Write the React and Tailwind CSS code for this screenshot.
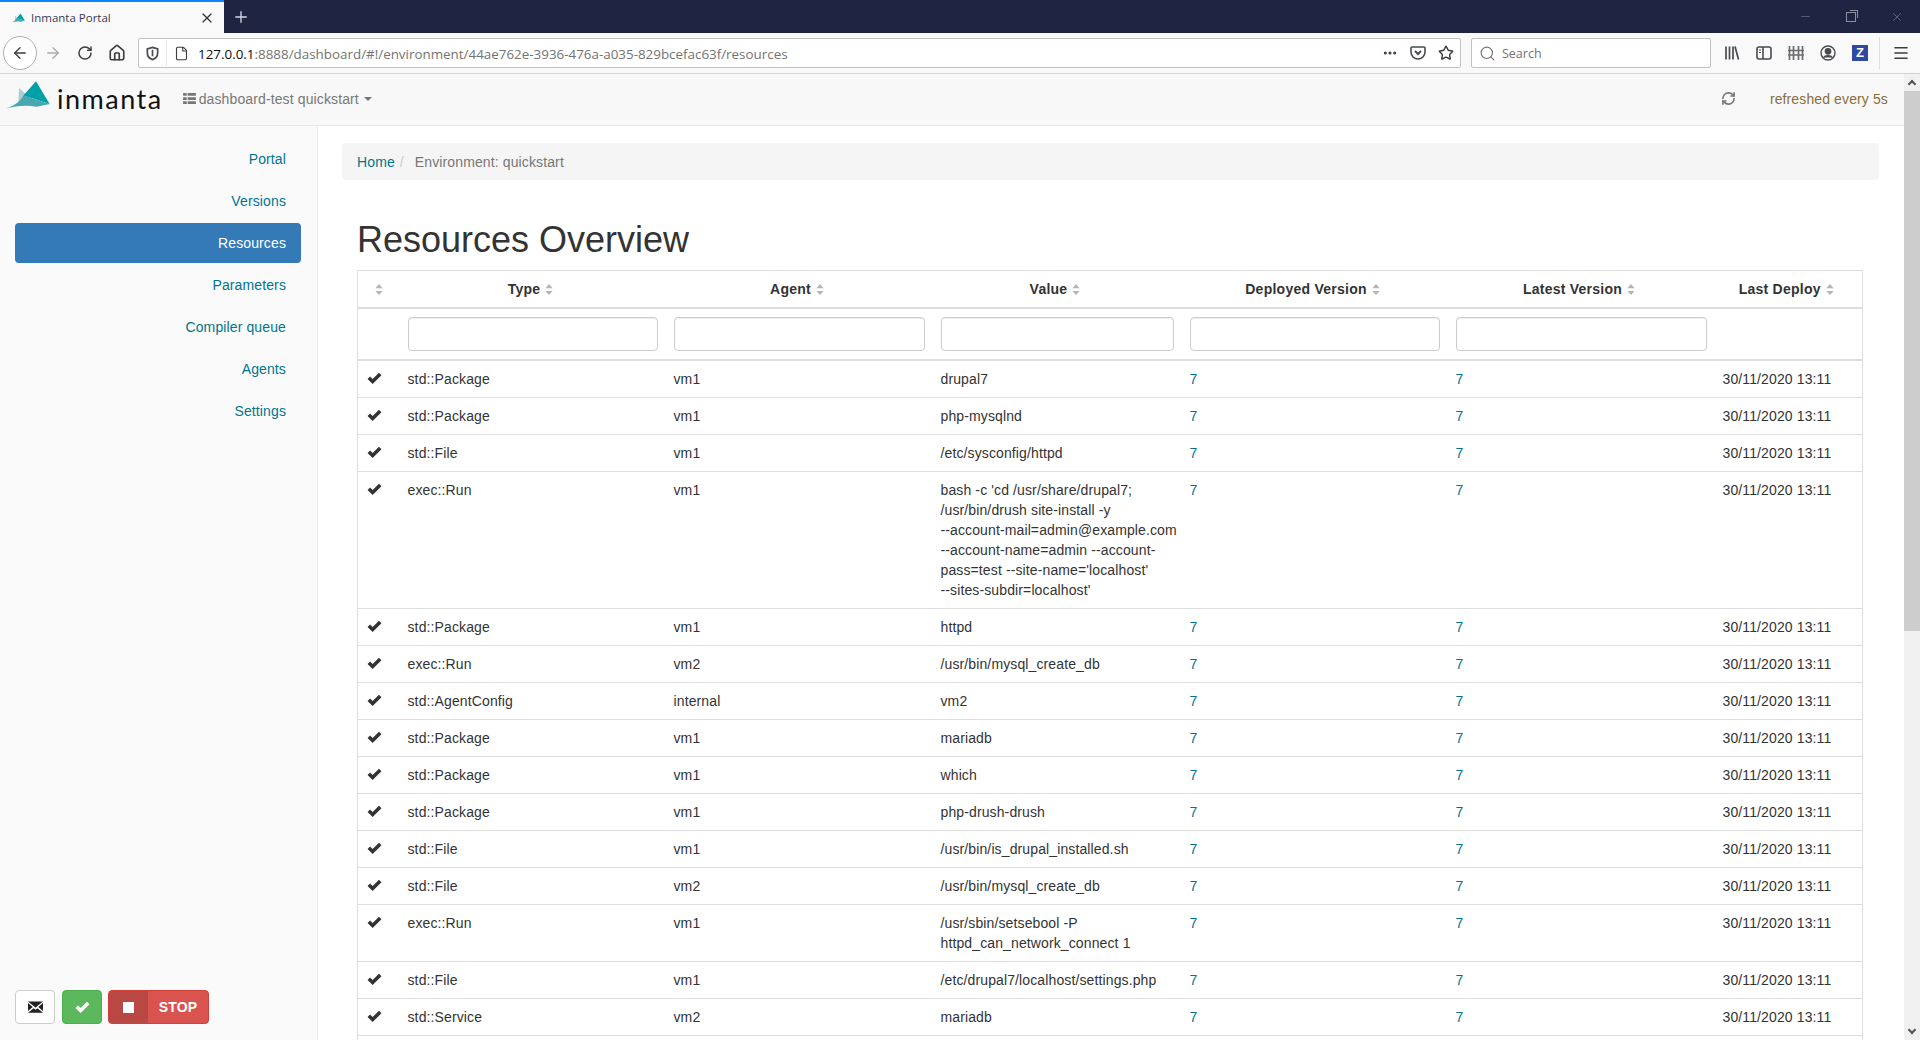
import React from "react";
import { Search, RefreshCw, RotateCw, ArrowLeft, ArrowRight, Home, File, Plus, X, Minus, Star, Ellipsis, Menu } from "lucide-react";

const rows = [
  ["std::Package", "vm1", "drupal7"],
  ["std::Package", "vm1", "php-mysqlnd"],
  ["std::File", "vm1", "/etc/sysconfig/httpd"],
  ["exec::Run", "vm1", "bash -c 'cd /usr/share/drupal7;\n/usr/bin/drush site-install -y\n--account-mail=admin@example.com\n--account-name=admin --account-\npass=test --site-name='localhost'\n--sites-subdir=localhost'"],
  ["std::Package", "vm1", "httpd"],
  ["exec::Run", "vm2", "/usr/bin/mysql_create_db"],
  ["std::AgentConfig", "internal", "vm2"],
  ["std::Package", "vm1", "mariadb"],
  ["std::Package", "vm1", "which"],
  ["std::Package", "vm1", "php-drush-drush"],
  ["std::File", "vm1", "/usr/bin/is_drupal_installed.sh"],
  ["std::File", "vm2", "/usr/bin/mysql_create_db"],
  ["exec::Run", "vm1", "/usr/sbin/setsebool -P\nhttpd_can_network_connect 1"],
  ["std::File", "vm1", "/etc/drupal7/localhost/settings.php"],
  ["std::Service", "vm2", "mariadb"],
];

const navItems = ["Portal", "Versions", "Resources", "Parameters", "Compiler queue", "Agents", "Settings"];

const Check = ({ className }) => (
  <svg viewBox="0 0 16 14" className={className} fill="currentColor">
    <path d="M0.500 7.500 3.200 4.800 6 7.600 12.800 0.800 15.500 3.500 6 13Z" />
  </svg>
);

const SortIcon = ({ first }) => (
  <svg
    viewBox="0 0 8 12"
    className={first ? "inline-block w-[8px] h-[11px] align-[-1px] text-[#b5b5b5]" : "inline-block w-[8px] h-[11px] ml-[5px] align-[-1px] text-[#b5b5b5]"}
    fill="currentColor"
  >
    <path d="M4 0 8 4.500H0Z" />
    <path d="M4 12 0 7.500H8Z" />
  </svg>
);

const Logo = ({ className }) => (
  <svg viewBox="0 0 43 27" className={className}>
    <path d="M12.700 6.700 24 17 12 24Z" fill="#a9cfd3" />
    <path d="M29.300 0 42.700 22.300 17 14Z" fill="#00a0a8" />
    <path d="M17 14 42.700 22.300 30 25C20 23 10 24 0 26.700 8 24 14 20 17 14Z" fill="#49a7b0" />
  </svg>
);

const Toolbar = () => (
  <div className="h-[41px] bg-[#f9f9fa] border-b border-[#d4d4d4] flex items-center text-[#3d3d3f] shrink-0">
    <div className="ml-[3px] w-[34px] h-[34px] rounded-full border border-[#b0b0b0] flex items-center justify-center bg-white">
      <ArrowLeft size={18} strokeWidth={1.8} />
    </div>
    <ArrowRight size={18} strokeWidth={1.8} className="ml-[7px] text-[#aaaaaa]" />
    <RotateCw size={16} strokeWidth={2.2} className="ml-[15px]" />
    <Home size={18} strokeWidth={2.2} className="ml-[15px]" />
    <div className="ml-[12px] w-[1323px] h-[30px] bg-white border border-[#c2c2c2] rounded-[2px] flex items-center">
      <svg viewBox="0 0 16 16" className="w-[15px] h-[15px] ml-[6px]" fill="none" stroke="#4a4a4f" strokeWidth="1.8">
        <path d="M8 1.500 13.500 3v4.500c0 3.500-2.500 6-5.500 7-3-1-5.500-3.500-5.500-7V3Z" />
        <path d="M8 4v7" />
      </svg>
      <div className="ml-[6px] w-px h-[26px] bg-[#e4e4e4]"></div>
      <File size={15} strokeWidth={1.8} className="ml-[7px]" />
      <span className="ml-[9px] pt-[1px] text-[13.400px] tracking-normal font-['Open_Sans',sans-serif] text-[#737373] whitespace-nowrap flex-1">
        <span className="text-[#0c0c0d]">127.0.0.1</span>:8888/dashboard/#!/environment/44ae762e-3936-476a-a035-829bcefac63f/resources
      </span>
      <Ellipsis size={16} strokeWidth={2.6} className="mr-[12px]" />
      <svg viewBox="0 0 16 16" className="w-[16px] h-[16px] mr-[12px]" fill="none" stroke="#4a4a4f" strokeWidth="1.6">
        <path d="M2 2h12a1 1 0 0 1 1 1v4a7 7 0 0 1-14 0V3a1 1 0 0 1 1-1Z" />
        <path d="M5 6l3 3 3-3" strokeWidth="2" />
      </svg>
      <Star size={16} strokeWidth={2.2} className="mr-[6px]" />
    </div>
    <div className="ml-[10px] w-[240px] h-[30px] bg-white border border-[#c2c2c2] rounded-[2px] flex items-center">
      <Search size={17} strokeWidth={1.6} className="ml-[7px] text-[#737373]" />
      <span className="ml-[6px] pt-[1px] text-[12.500px] tracking-normal font-['Open_Sans',sans-serif] text-[#737373]">Search</span>
    </div>
    <div className="ml-[13px] flex items-center gap-[16px]">
      <svg viewBox="0 0 16 16" className="w-[16px] h-[16px]" fill="none" stroke="#4a4a4f" strokeWidth="1.7">
        <path d="M2 1.500v13M5.500 1.500v13M9 1.500v13M11 1.500l3.500 13" />
      </svg>
      <svg viewBox="0 0 16 16" className="w-[16px] h-[16px]" fill="none" stroke="#4a4a4f" strokeWidth="1.6">
        <rect x="1" y="2" width="14" height="12" rx="2" />
        <path d="M7 2v12" />
        <path d="M3 5h2M3 7.500h2" strokeWidth="1" />
      </svg>
      <svg viewBox="0 0 16 16" className="w-[16px] h-[16px]" fill="none" stroke="#6d6d70" strokeWidth="1.700">
        <path d="M1.500 1v14M5.500 1v14M10.500 1v14M14.500 1v14M0 5.500h16M0 10h16" />
      </svg>
      <svg viewBox="0 0 16 16" className="w-[16px] h-[16px]" fill="none" stroke="#4a4a4f" strokeWidth="1.4">
        <circle cx="8" cy="8" r="7" />
        <circle cx="8" cy="6.300" r="2.700" fill="#4a4a4f" />
        <path d="M3.500 12.500C5 10 11 10 12.500 12.500" fill="#4a4a4f" />
      </svg>
      <div className="w-[16px] h-[16px] bg-[#2f4a9e] text-white text-[13px] font-bold leading-[16px] text-center">Z</div>
    </div>
    <div className="ml-[11px] w-px h-[32px] bg-[#dedede]"></div>
    <Menu size={18} strokeWidth={2.2} className="ml-[12px]" />
  </div>
);

const App = () => {
  return (
    <div className="h-[1040px] w-[1920px] overflow-hidden flex flex-col font-['Liberation_Sans',Arial,sans-serif] text-[14px] leading-[20px] tracking-[0.12px] text-[#333333] bg-white">
      {/* browser chrome */}
      <div className="h-[33px] bg-[#1f2442] flex items-stretch shrink-0">
        <div className="w-[224px] bg-[#f9f9fa] border-t-2 border-[#0a84ff] flex items-center pl-[11px]">
          <Logo className="w-[14px] h-[10px]" />
          <span className="ml-[6px] text-[11.500px] tracking-normal font-['Open_Sans',sans-serif] text-[#3a3a50]">Inmanta Portal</span>
          <X size={16} strokeWidth={1.8} className="ml-auto mr-[9px] text-[#333333]" />
        </div>
        <div className="flex items-center ml-[8px] text-[#d8d8e0]"><Plus size={18} strokeWidth={1.8} /></div>
        <div className="ml-auto flex items-center text-[#8b8ea3]">
          <Minus size={13} strokeWidth={1} />
          <div className="ml-[34px] w-[10px] h-[10px] border border-[#8b8ea3] relative">
            <span className="absolute -top-[3px] -right-[3px] w-[8px] h-[8px] border-t border-r border-[#8b8ea3]"></span>
          </div>
          <X size={14} strokeWidth={1} className="ml-[34px] mr-[16px]" />
        </div>
      </div>
      <Toolbar />

      <div className="flex-1 flex min-h-0">
        <div className="flex-1 flex flex-col min-w-0">
          {/* top navbar */}
          <div className="h-[52px] bg-[#f8f8f8] border-b border-[#e7e7e7] flex items-center shrink-0 pl-[6px] pb-[2px]">
            <Logo className="w-[44px] h-[28px] mb-[7px]" />
            <span className="ml-[7px] text-[27px] tracking-[1.500px] font-['Lato',sans-serif] font-normal text-[#111111] leading-none mb-[1px]">inmanta</span>
            <span className="ml-[20px] text-[#777777] flex items-center">
              <svg viewBox="0 0 14 12" className="w-[13px] h-[11px] mr-[3px]" fill="currentColor">
                <path d="M0 0h4v3H0ZM5 0h9v3H5ZM0 4.500h4v3H0ZM5 4.500h9v3H5ZM0 9h4v3H0ZM5 9h9v3H5Z" />
              </svg>
              dashboard-test quickstart
              <span className="ml-[5px] w-0 h-0 border-x-[4px] border-x-transparent border-t-[4px] border-t-[#777777]"></span>
            </span>
            <RefreshCw size={15} strokeWidth={2.6} className="ml-auto text-[#777777]" />
            <span className="ml-[34px] mr-[16px] text-[#8a6d3b]">refreshed every 5s</span>
          </div>

          <div className="flex-1 flex min-h-0">
            {/* sidebar */}
            <div className="w-[318px] shrink-0 bg-[#fafafa] border-r border-[#eeeeee] pl-[15px] pr-[16px] pt-[13px] flex flex-col">
              {navItems.map((item) => (
                <div
                  key={item}
                  className={
                    item === "Resources"
                      ? "h-[40px] mb-[2px] rounded-[4px] bg-[#337ab7] text-white flex items-center justify-end pr-[15px]"
                      : "h-[40px] mb-[2px] text-[#007590] flex items-center justify-end pr-[15px]"
                  }
                >
                  {item}
                </div>
              ))}
              <div className="mt-auto mb-[16px] flex items-center">
                <div className="w-[40px] h-[34px] bg-white border border-[#cccccc] rounded-[4px] flex items-center justify-center">
                  <svg viewBox="0 0 16 12" className="w-[15px] h-[12px]" fill="#222222">
                    <path d="M0 0 8 6.500 16 0ZM0 1.800V10.200L5 6ZM16 1.800V10.200L11 6ZM0 12H16L10 7.200 8 8.800 6 7.200Z" />
                  </svg>
                </div>
                <div className="ml-[7px] w-[40px] h-[34px] bg-[#5cb85c] border border-[#4cae4c] rounded-[4px] flex items-center justify-center text-white">
                  <Check className="w-[15px] h-[13px]" />
                </div>
                <div className="ml-[6px] w-[101px] h-[34px] bg-[#d9534f] border border-[#d43f3a] rounded-[4px] flex items-center overflow-hidden text-white font-bold">
                  <span className="w-[39px] h-full bg-[#b94743] flex items-center justify-center">
                    <span className="w-[11px] h-[11px] bg-white"></span>
                  </span>
                  <span className="flex-1 text-center">STOP</span>
                </div>
              </div>
            </div>

            {/* main */}
            <div className="flex-1 min-w-0 overflow-hidden pl-[24px] pr-[25px] pt-[17px]">
              <div className="h-[37px] bg-[#f5f5f5] rounded-[4px] flex items-center pl-[15px]">
                <span className="text-[#007590]">Home</span>
                <span className="text-[#cccccc] ml-[5px]">/</span>
                <span className="text-[#777777] ml-[11px]">Environment: quickstart</span>
              </div>
              <h1 className="ml-[15px] mt-[40px] mb-[10px] text-[36px] leading-[40px] font-normal tracking-normal">Resources Overview</h1>
              <table className="ml-[15px] w-[1506px] table-fixed border-collapse border border-[#dddddd]">
                <colgroup>
                  <col className="w-[42px]" />
                  <col className="w-[266px]" />
                  <col className="w-[267px]" />
                  <col className="w-[249px]" />
                  <col className="w-[266px]" />
                  <col className="w-[267px]" />
                  <col />
                </colgroup>
                <thead>
                  <tr className="border-b-2 border-[#dddddd] h-[37px]">
                    <th className="p-2 text-center font-bold"><SortIcon first /></th>
                    {["Type", "Agent", "Value", "Deployed Version", "Latest Version", "Last Deploy"].map((h) => (
                      <th key={h} className="py-2 pl-2 pr-[12px] text-center font-bold whitespace-nowrap tracking-[0.25px]">{h}<SortIcon /></th>
                    ))}
                  </tr>
                  <tr className="border-b-2 border-[#dddddd]">
                    <th className="p-2"></th>
                    {[0, 1, 2, 3, 4].map((i) => (
                      <th key={i} className="p-2">
                        <input className="block w-full h-[34px] bg-white border border-[#cccccc] rounded-[4px] shadow-[inset_0_1px_1px_rgba(0,0,0,0.075)]" />
                      </th>
                    ))}
                    <th className="p-2"></th>
                  </tr>
                </thead>
                <tbody>
                  {rows.map((row, i) => (
                    <tr key={i} className="border-b border-[#dddddd] align-top">
                      <td className="p-2 pl-[9px] pt-[11px]"><Check className="w-[15px] h-[13px]" /></td>
                      <td className="p-2">{row[0]}</td>
                      <td className="p-2">{row[1]}</td>
                      <td className="p-2 whitespace-pre">{row[2]}</td>
                      <td className="p-2 text-[#007590]">7</td>
                      <td className="p-2 text-[#007590]">7</td>
                      <td className="p-2 whitespace-nowrap">30/11/2020 13:11</td>
                    </tr>
                  ))}
                  <tr className="h-[37px]">
                    <td colSpan={7}></td>
                  </tr>
                </tbody>
              </table>
            </div>
          </div>
        </div>

        {/* scrollbar */}
        <div className="w-[16px] shrink-0 bg-[#f0f0f0] flex flex-col">
          <div className="h-[17px] flex items-center justify-center">
            <span className="w-[6px] h-[6px] border-l-2 border-t-2 border-[#505050] rotate-45 mt-[3px]"></span>
          </div>
          <div className="h-[540px] bg-[#cdcdcd]"></div>
          <div className="mt-auto h-[17px] flex items-center justify-center">
            <span className="w-[6px] h-[6px] border-r-2 border-b-2 border-[#505050] rotate-45 mb-[3px]"></span>
          </div>
        </div>
      </div>
    </div>
  );
};

export default App;
